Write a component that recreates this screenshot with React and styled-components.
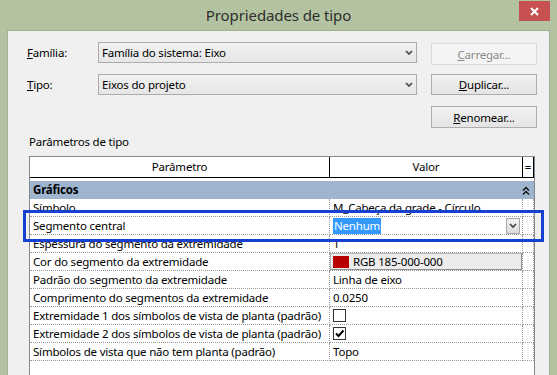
import React from "react";
import styled, { createGlobalStyle } from "styled-components";

const Global = createGlobalStyle`
  html, body { margin: 0; padding: 0; }
  body {
    font-family: "Noto Sans", "Open Sans", sans-serif;
    font-size: 11.5px;
    letter-spacing: -0.2px;
    color: #000;
  }
  * { box-sizing: border-box; }
`;

const Window = styled.div`
  width: 557px;
  height: 375px;
  background: #b3c3a1;
  overflow: hidden;
  display: flex;
  flex-direction: column;
`;

const TitleBar = styled.div`
  height: 30px;
  flex: none;
  display: grid;
  grid-template-columns: 1fr auto 1fr;
  align-items: start;
`;

const Title = styled.div`
  grid-column: 2;
  font-size: 15px;
  letter-spacing: -0.1px;
  line-height: 30px;
  color: #2e2e2e;
`;

const CloseButton = styled.div`
  grid-column: 3;
  justify-self: end;
  width: 31px;
  height: 20px;
  margin-top: 1px;
  margin-right: 7px;
  background: #c75050;
  display: flex;
  align-items: center;
  justify-content: center;
`;

const Panel = styled.div`
  flex: 1;
  margin: 0 7px;
  background: #f0f0f0;
  border: 1px solid #a3b094;
  border-bottom: none;
  display: flex;
  flex-direction: column;
  padding: 11px 0 0 0;
`;

const Form = styled.div`
  display: grid;
  grid-template-columns: 57px 319px 106px;
  grid-auto-rows: 22px;
  column-gap: 14px;
  row-gap: 10px;
  padding-left: 19px;
  align-items: start;
`;

const Label = styled.div`
  grid-column: 1;
  line-height: 21px;
  color: #000;
`;

const Select = styled.div`
  grid-column: 2;
  height: 21px;
  border: 1px solid #acacac;
  background: linear-gradient(#f2f2f2, #e6e6e6);
  display: flex;
  align-items: center;
  justify-content: space-between;
  padding: 0 3px 0 3px;
`;

const Button = styled.div`
  grid-column: 3;
  grid-row: ${(p) => p.$row};
  height: ${(p) => (p.$row === 2 ? 21 : 22)}px;
  margin-top: ${(p) => (p.$row === 1 ? 1 : 0)}px;
  border: 1px solid ${(p) => (p.$disabled ? "#d9d9d9" : "#adadad")};
  background: ${(p) =>
    p.$disabled ? "#f4f4f4" : "linear-gradient(#f1f1f1, #e4e4e4)"};
  color: ${(p) => (p.$disabled ? "#8a8a8a" : "#000")};
  display: flex;
  align-items: center;
  justify-content: center;
`;

const U = styled.span`
  text-decoration: underline;
`;

const SectionLabel = styled.div`
  margin: 6px 0 0 21px;
  line-height: 16px;
`;

const Table = styled.div`
  margin: 6px 14px 0 21px;
  flex: 1;
  background: #fff;
  border: 1px solid #828790;
  border-bottom: none;
  display: flex;
  flex-direction: column;
`;

const Cols = "300px 193px 11px";

const HeaderRow = styled.div`
  display: grid;
  grid-template-columns: ${Cols};
  height: 21px;
  border-bottom: 1px solid #000;
  margin-bottom: 3px;
`;

const HeaderCell = styled.div`
  border-right: 1px solid #000;
  display: flex;
  align-items: center;
  justify-content: center;
  line-height: 20px;
`;

const GroupRow = styled.div`
  display: grid;
  grid-template-columns: 492px 12px;
  height: 18px;
  background: #9fb5cf;
  align-items: center;
`;

const GroupTitle = styled.div`
  font-weight: bold;
  padding-left: 3px;
  line-height: 18px;
`;

const Row = styled.div`
  position: relative;
  display: grid;
  grid-template-columns: ${Cols};
  height: 18px;
`;

const Cell = styled.div`
  border-right: 1px dotted #9a9a9a;
  border-bottom: 1px dotted #9a9a9a;
  padding-left: ${(p) => (p.$flush ? 0 : 3)}px;
  display: flex;
  align-items: center;
  white-space: nowrap;
  overflow: hidden;
  line-height: 17px;
`;

const Highlight = styled.div`
  position: absolute;
  left: -7px;
  right: -10px;
  top: -7px;
  bottom: -7px;
  border: 3px solid #1540d2;
  z-index: 2;
  pointer-events: none;
`;

const ComboValue = styled.div`
  flex: 1;
  display: flex;
  align-items: center;
  justify-content: space-between;
  padding-right: 2px;
  height: 100%;
`;

const Selected = styled.span`
  background: #3399ff;
  color: #fff;
  padding: 0 1px;
  line-height: 16px;
`;

const DropButton = styled.div`
  width: 14px;
  height: 16px;
  border: 1px solid #a9a9a9;
  background: linear-gradient(#f3f3f3, #dcdcdc);
  display: flex;
  align-items: center;
  justify-content: center;
`;

const ColorButton = styled.div`
  flex: 1;
  height: 17px;
  border: 1px solid #b4b4b4;
  border-right-color: #8e8e8e;
  border-bottom-color: #8e8e8e;
  background: #ececec;
  display: flex;
  align-items: center;
  gap: 4px;
  padding-left: 2px;
`;

const Swatch = styled.span`
  width: 16px;
  height: 12px;
  background: #b90000;
`;

const Check = styled.span`
  width: 13px;
  height: 13px;
  border: 1px solid #333;
  background: #fff;
  display: flex;
  align-items: center;
  justify-content: center;
`;

const Chevron = () => (
  <svg width="8" height="5" viewBox="0 0 8 5">
    <path d="M1 1 L4 4 L7 1" fill="none" stroke="#474747" strokeWidth="1.7" />
  </svg>
);

const DoubleUp = () => (
  <svg width="8" height="9" viewBox="0 0 8 9">
    <path d="M1 4.5 L4 1.5 L7 4.5 M1 8.5 L4 5.5 L7 8.5" fill="none" stroke="#111" strokeWidth="1.4" />
  </svg>
);

const CloseX = () => (
  <svg width="9" height="9" viewBox="0 0 9 9">
    <path d="M1 1 L8 8 M8 1 L1 8" stroke="#fff" strokeWidth="2" />
  </svg>
);

const CheckMark = () => (
  <svg width="11" height="11" viewBox="0 0 11 11">
    <path d="M2 5.5 L4.5 8 L9.5 2.5" fill="none" stroke="#000" strokeWidth="2" />
  </svg>
);

const rows = [
  { p: "Símbolo", v: "M_Cabeça da grade - Círculo" },
  { p: "Segmento central", kind: "combo", v: "Nenhum" },
  { p: "Espessura do segmento da extremidade", v: "1" },
  { p: "Cor do segmento da extremidade", kind: "color", v: "RGB 185-000-000" },
  { p: "Padrão do segmento da extremidade", v: "Linha de eixo" },
  { p: "Comprimento do segmentos da extremidade", v: "0.0250" },
  { p: "Extremidade 1 dos símbolos de vista de planta (padrão)", kind: "check", v: false },
  { p: "Extremidade 2 dos símbolos de vista de planta (padrão)", kind: "check", v: true },
  { p: "Símbolos de vista que não tem planta (padrão)", v: "Topo" },
];

function ValueCell({ row }) {
  if (row.kind === "combo") {
    return (
      <Cell>
        <ComboValue>
          <Selected>{row.v}</Selected>
          <DropButton>
            <Chevron />
          </DropButton>
        </ComboValue>
      </Cell>
    );
  }
  if (row.kind === "color") {
    return (
      <Cell $flush>
        <ColorButton>
          <Swatch />
          {row.v}
        </ColorButton>
      </Cell>
    );
  }
  if (row.kind === "check") {
    return (
      <Cell>
        <Check>{row.v && <CheckMark />}</Check>
      </Cell>
    );
  }
  return <Cell>{row.v}</Cell>;
}

export default function App() {
  return (
    <Window>
      <Global />
      <TitleBar>
        <Title>Propriedades de tipo</Title>
        <CloseButton>
          <CloseX />
        </CloseButton>
      </TitleBar>
      <Panel>
        <Form>
          <Label>
            <U>F</U>amília:
          </Label>
          <Select>
            Família do sistema: Eixo
            <Chevron />
          </Select>
          <Button $row={1} $disabled>
            <U>C</U>arregar...
          </Button>
          <Label>
            <U>T</U>ipo:
          </Label>
          <Select>
            Eixos do projeto
            <Chevron />
          </Select>
          <Button $row={2}>
            <U>D</U>uplicar...
          </Button>
          <Button $row={3}>
            <U>R</U>enomear...
          </Button>
        </Form>
        <SectionLabel>Parâmetros de tipo</SectionLabel>
        <Table>
          <HeaderRow>
            <HeaderCell>Parâmetro</HeaderCell>
            <HeaderCell>Valor</HeaderCell>
            <HeaderCell>=</HeaderCell>
          </HeaderRow>
          <GroupRow>
            <GroupTitle>Gráficos</GroupTitle>
            <DoubleUp />
          </GroupRow>
          {rows.map((r) => (
            <Row key={r.p}>
              <Cell>{r.p}</Cell>
              <ValueCell row={r} />
              <Cell $flush />
              {r.kind === "combo" && <Highlight />}
            </Row>
          ))}
        </Table>
      </Panel>
    </Window>
  );
}
